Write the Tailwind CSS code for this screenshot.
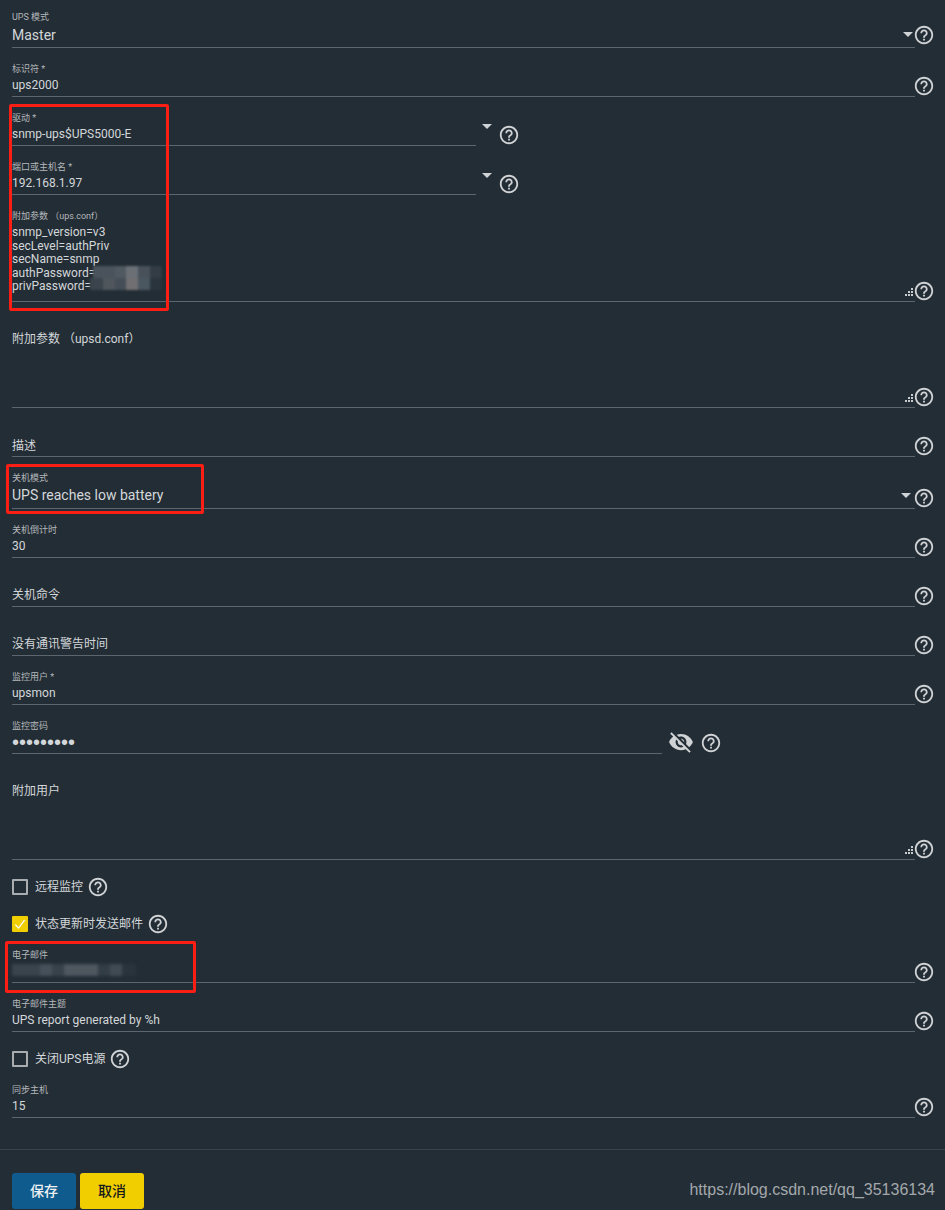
<!DOCTYPE html>
<html lang="zh">
<head>
<meta charset="utf-8">
<script src="https://cdn.jsdelivr.net/npm/@tailwindcss/browser@4"></script>
<title>UPS</title>
</head>
<body class="bg-[#232d35] m-0">
<svg class="hidden"><defs>
<symbol id="help" viewBox="0 0 24 24"><path fill="currentColor" d="M11 18h2v-2h-2v2zm1-16C6.48 2 2 6.48 2 12s4.48 10 10 10 10-4.48 10-10S17.52 2 12 2zm0 18c-4.41 0-8-3.59-8-8s3.59-8 8-8 8 3.59 8 8-3.59 8-8 8zm0-14c-2.21 0-4 1.79-4 4h2c0-1.1.9-2 2-2s2 .9 2 2c0 2-3 1.75-3 5h2c0-2.25 3-2.5 3-5 0-2.21-1.79-4-4-4z"/></symbol>
<symbol id="grip" viewBox="0 0 9 9"><path fill="currentColor" d="M7 0h2v2H7zM4 3h2v2H4zM7 3h2v2H7zM1 6h2v2H1zM4 6h2v2H4zM7 6h2v2H7z"/></symbol>
</defs></svg>
<div class="relative w-[945px] h-[1210px] overflow-hidden font-['Roboto','Noto_Sans_CJK_SC',sans-serif] text-[12px] text-[#d3d7da]">
  <div class="flex flex-col pl-[12px]">

    <div class="flex items-end h-[48px]">
      <div class="relative w-[903px] flex flex-col border-b border-[#5d666e]">
        <span class="text-[9px] leading-[12px] text-[#b4b8bb]">UPS 模式</span>
        <span class="text-[14px] leading-[24px]">Master</span>
        <span class="absolute right-[2px] bottom-[10px] border-x-[5px] border-x-transparent border-t-[5px] border-t-[#d0d3d5]"></span>
      </div>
      <svg class="w-[22px] h-[22px] -ml-[2px] mb-[2px] text-[#d0d3d5]"><use href="#help"/></svg>
    </div>

    <div class="flex items-end h-[49px]">
      <div class="w-[903px] flex flex-col border-b border-[#5d666e] pb-[1px]">
        <span class="text-[9px] leading-[12px] mb-[1px] text-[#b4b8bb]">标识符 *</span>
        <span class="leading-[19px]">ups2000</span>
      </div>
      <svg class="w-[22px] h-[22px] -ml-[2px] text-[#d0d3d5]"><use href="#help"/></svg>
    </div>

    <div class="flex items-end h-[49px]">
      <div class="w-[464px] flex flex-col border-b border-[#5d666e] pb-[1px]">
        <span class="text-[9px] leading-[12px] mb-[1px] text-[#b4b8bb]">驱动 *</span>
        <span class="leading-[19px]">snmp-ups$UPS5000-E</span>
      </div>
      <span class="ml-[6px] mb-[17px] border-x-[5px] border-x-transparent border-t-[5px] border-t-[#d0d3d5]"></span>
      <svg class="w-[22px] h-[22px] ml-[6px] text-[#d0d3d5]"><use href="#help"/></svg>
    </div>

    <div class="flex items-end h-[49px]">
      <div class="w-[464px] flex flex-col border-b border-[#5d666e] pb-[1px]">
        <span class="text-[9px] leading-[12px] mb-[1px] text-[#b4b8bb]">端口或主机名 *</span>
        <span class="leading-[19px]">192.168.1.97</span>
      </div>
      <span class="ml-[6px] mb-[17px] border-x-[5px] border-x-transparent border-t-[5px] border-t-[#d0d3d5]"></span>
      <svg class="w-[22px] h-[22px] ml-[6px] text-[#d0d3d5]"><use href="#help"/></svg>
    </div>

    <div class="flex items-end h-[107px]">
      <div class="relative w-[903px] h-[92px] flex flex-col border-b border-[#5d666e]">
        <span class="text-[9px] leading-[12px] text-[#b4b8bb]">附加参数 （ups.conf）</span>
        <span class="leading-[13.5px] mt-[4px]">snmp_version=v3<br>secLevel=authPriv<br>secName=snmp<br>authPassword=<br>privPassword=</span>
        <svg class="absolute right-[2px] bottom-[4px] w-[9px] h-[9px] text-[#c8cbcd]"><use href="#grip"/></svg>
      </div>
      <svg class="w-[22px] h-[22px] -ml-[2px] text-[#d0d3d5]"><use href="#help"/></svg>
    </div>

    <div class="flex items-end h-[106px]">
      <div class="relative w-[903px] h-[76px] flex flex-col border-b border-[#5d666e]">
        <span class="leading-[14px]">附加参数 （upsd.conf）</span>
        <svg class="absolute right-[2px] bottom-[4px] w-[9px] h-[9px] text-[#c8cbcd]"><use href="#grip"/></svg>
      </div>
      <svg class="w-[22px] h-[22px] -ml-[2px] text-[#d0d3d5]"><use href="#help"/></svg>
    </div>

    <div class="flex items-end h-[49px]">
      <div class="w-[903px] border-b border-[#5d666e] pb-[1px]"><span class="block leading-[17px]">描述</span></div>
      <svg class="w-[22px] h-[22px] -ml-[2px] text-[#d0d3d5]"><use href="#help"/></svg>
    </div>

    <div class="flex items-end h-[52px]">
      <div class="relative w-[903px] flex flex-col border-b border-[#5d666e] pb-[2px]">
        <span class="text-[9px] leading-[12px] text-[#b4b8bb]">关机模式</span>
        <span class="text-[14px] leading-[22px]">UPS reaches low battery</span>
        <span class="absolute right-[4px] bottom-[10px] border-x-[5px] border-x-transparent border-t-[5px] border-t-[#d0d3d5]"></span>
      </div>
      <svg class="w-[22px] h-[22px] -ml-[2px] text-[#d0d3d5]"><use href="#help"/></svg>
    </div>

    <div class="flex items-end h-[49px]">
      <div class="w-[903px] flex flex-col border-b border-[#5d666e] pb-[1px]">
        <span class="text-[9px] leading-[12px] mb-[1px] text-[#b4b8bb]">关机倒计时</span>
        <span class="leading-[19px]">30</span>
      </div>
      <svg class="w-[22px] h-[22px] -ml-[2px] text-[#d0d3d5]"><use href="#help"/></svg>
    </div>

    <div class="flex items-end h-[49px]">
      <div class="w-[903px] border-b border-[#5d666e] pb-[2px]"><span class="block leading-[17px]">关机命令</span></div>
      <svg class="w-[22px] h-[22px] -ml-[2px] text-[#d0d3d5]"><use href="#help"/></svg>
    </div>

    <div class="flex items-end h-[49px]">
      <div class="w-[903px] border-b border-[#5d666e] pb-[2px]"><span class="block leading-[17px]">没有通讯警告时间</span></div>
      <svg class="w-[22px] h-[22px] -ml-[2px] text-[#d0d3d5]"><use href="#help"/></svg>
    </div>

    <div class="flex items-end h-[49px]">
      <div class="w-[903px] flex flex-col border-b border-[#5d666e] pb-[1px]">
        <span class="text-[9px] leading-[12px] mb-[1px] text-[#b4b8bb]">监控用户 *</span>
        <span class="leading-[19px]">upsmon</span>
      </div>
      <svg class="w-[22px] h-[22px] -ml-[2px] text-[#d0d3d5]"><use href="#help"/></svg>
    </div>

    <div class="flex items-end h-[49px]">
      <div class="w-[650px] flex flex-col border-b border-[#5d666e] pb-[1px]">
        <span class="text-[9px] leading-[12px] mb-[1px] text-[#b4b8bb]">监控密码</span>
        <span class="font-['Liberation_Sans',sans-serif] text-[20px] leading-[19px]">•••••••••</span>
      </div>
      <svg class="w-[26px] h-[26px] ml-[6px] -mb-[1px] text-[#d0d3d5]" viewBox="0 0 24 24"><path fill="currentColor" d="M12 7c2.76 0 5 2.24 5 5 0 .65-.13 1.26-.36 1.83l2.92 2.92c1.51-1.26 2.7-2.89 3.43-4.75-1.73-4.39-6-7.5-11-7.5-1.4 0-2.74.25-3.98.7l2.16 2.16C10.74 7.13 11.35 7 12 7zM2 4.27l2.28 2.28.46.46C3.08 8.3 1.78 10.02 1 12c1.73 4.39 6 7.5 11 7.5 1.55 0 3.03-.3 4.38-.84l.42.42L19.73 22 21 20.73 3.27 3 2 4.27zM7.53 9.8l1.55 1.55c-.05.21-.08.43-.08.65 0 1.66 1.34 3 3 3 .22 0 .44-.03.65-.08l1.55 1.55c-.67.33-1.41.53-2.2.53-2.76 0-5-2.24-5-5 0-.79.2-1.53.53-2.2zm4.31-.78l3.15 3.15.02-.16c0-1.66-1.34-3-3-3l-.17.01z"/></svg>
      <svg class="w-[22px] h-[22px] ml-[6px] text-[#d0d3d5]"><use href="#help"/></svg>
    </div>

    <div class="flex items-end h-[106px]">
      <div class="relative w-[903px] h-[76px] flex flex-col border-b border-[#5d666e]">
        <span class="leading-[14px]">附加用户</span>
        <svg class="absolute right-[2px] bottom-[4px] w-[9px] h-[9px] text-[#c8cbcd]"><use href="#grip"/></svg>
      </div>
      <svg class="w-[22px] h-[22px] -ml-[2px] text-[#d0d3d5]"><use href="#help"/></svg>
    </div>

    <div class="flex items-center h-[54px]">
      <span class="w-[16px] h-[16px] border-2 border-[#a9adb0] rounded-[1px]"></span>
      <span class="ml-[7px]">远程监控</span>
      <svg class="w-[22px] h-[22px] ml-[4px] text-[#d0d3d5]"><use href="#help"/></svg>
    </div>

    <div class="flex items-center h-[20px]">
      <span class="flex items-center justify-center w-[16px] h-[16px] bg-[#f0ce00] rounded-[1px]">
        <svg class="w-[14px] h-[14px] text-white" viewBox="0 0 12 12"><path fill="none" stroke="currentColor" stroke-width="1.1" d="M2 6.5 4.8 9.5 10 2.5"/></svg>
      </span>
      <span class="ml-[7px]">状态更新时发送邮件</span>
      <svg class="w-[22px] h-[22px] ml-[4px] text-[#d0d3d5]"><use href="#help"/></svg>
    </div>

    <div class="flex items-end h-[49px]">
      <div class="w-[903px] flex flex-col border-b border-[#5d666e] pb-[1px]">
        <span class="text-[9px] leading-[12px] mb-[1px] text-[#b4b8bb]">电子邮件</span>
        <span class="h-[19px]"></span>
      </div>
      <svg class="w-[22px] h-[22px] -ml-[2px] text-[#d0d3d5]"><use href="#help"/></svg>
    </div>

    <div class="flex items-end h-[49px]">
      <div class="w-[903px] flex flex-col border-b border-[#5d666e] pb-[1px]">
        <span class="text-[9px] leading-[12px] mb-[1px] text-[#b4b8bb]">电子邮件主题</span>
        <span class="leading-[19px]">UPS report generated by %h</span>
      </div>
      <svg class="w-[22px] h-[22px] -ml-[2px] text-[#d0d3d5]"><use href="#help"/></svg>
    </div>

    <div class="flex items-center h-[54px]">
      <span class="w-[16px] h-[16px] border-2 border-[#a9adb0] rounded-[1px]"></span>
      <span class="ml-[7px]">关闭UPS电源</span>
      <svg class="w-[22px] h-[22px] ml-[4px] text-[#d0d3d5]"><use href="#help"/></svg>
    </div>

    <div class="flex items-end h-[32px]">
      <div class="w-[903px] flex flex-col border-b border-[#5d666e] pb-[1px]">
        <span class="text-[9px] leading-[12px] mb-[1px] text-[#b4b8bb]">同步主机</span>
        <span class="leading-[19px]">15</span>
      </div>
      <svg class="w-[22px] h-[22px] -ml-[2px] text-[#d0d3d5]"><use href="#help"/></svg>
    </div>
  </div>

  <div class="mt-[31px] border-t border-[#39434b]"></div>

  <div class="flex gap-[4px] pl-[12px] mt-[23px]">
    <button class="w-[64px] h-[36px] bg-[#0f5b8d] rounded-[3px] text-[14px] font-medium text-[#eef1f3]">保存</button>
    <button class="w-[64px] h-[36px] bg-[#f0ce00] rounded-[3px] text-[14px] font-medium text-[#15191c]">取消</button>
  </div>

  <!-- blurred (redacted) patches lying over the text -->
  <div class="absolute left-[90px] top-[266px] flex flex-col blur-[1px]">
    <div class="flex h-[12px] pl-[3px]">
      <span class="w-[22px] bg-[#4a535c]"></span><span class="w-[11px] bg-[#505860]"></span><span class="w-[12px] bg-[#6a7076]"></span><span class="w-[12px] bg-[#48515a]"></span><span class="w-[12px] bg-[#333c44]"></span>
    </div>
    <div class="flex h-[12px]">
      <span class="w-[13px] bg-[#3b444c]"></span><span class="w-[12px] bg-[#4f565c]"></span><span class="w-[11px] bg-[#454e57]"></span><span class="w-[12px] bg-[#716f72]"></span><span class="w-[12px] bg-[#4a5660]"></span><span class="w-[12px] bg-[#2a343c]"></span>
    </div>
  </div>
  <div class="absolute left-[12px] top-[964px] flex h-[12px] blur-[1.5px]">
    <span class="w-[28px] bg-[#3a444c]"></span><span class="w-[12px] bg-[#46505a]"></span><span class="w-[12px] bg-[#38424a]"></span><span class="w-[34px] bg-[#4e565e]"></span><span class="w-[12px] bg-[#333d45]"></span><span class="w-[12px] bg-[#414b53]"></span><span class="w-[14px] bg-[#2a343c]"></span>
  </div>

  <!-- red annotation boxes -->
  <div class="absolute left-[9px] top-[104px] w-[160px] h-[207px] border-[3px] border-[#fa1e14] rounded-[2px]"></div>
  <div class="absolute left-[6px] top-[464px] w-[198px] h-[50px] border-[3px] border-[#fa1e14] rounded-[2px]"></div>
  <div class="absolute left-[5px] top-[941px] w-[191px] h-[52px] border-[3px] border-[#fa1e14] rounded-[2px]"></div>

  <!-- watermark -->
  <div class="absolute right-[10px] top-[1181px] font-['Liberation_Sans',sans-serif] text-[16px] leading-[18px] text-[#a3a8ac]">https://blog.csdn.net/qq_35136134</div>
</div>
</body>
</html>
